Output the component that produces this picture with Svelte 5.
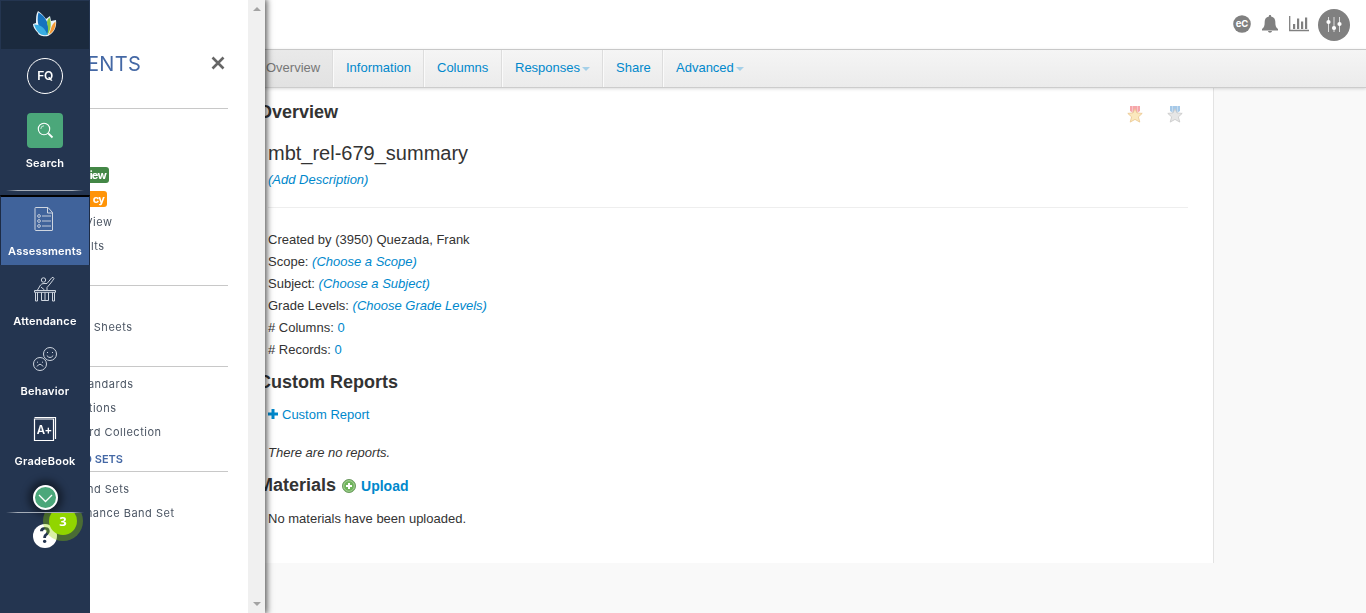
<script>
  const tabs = [
    { label: 'Overview', active: true, width: 83 },
    { label: 'Information', width: 91 },
    { label: 'Columns', width: 78 },
    { label: 'Responses', caret: true, width: 101 },
    { label: 'Share', width: 60 },
    { label: 'Advanced', caret: true, width: 96 }
  ];
  const details = [
    ['Scope:', '(Choose a Scope)', true],
    ['Subject:', '(Choose a Subject)', true],
    ['Grade Levels:', '(Choose Grade Levels)', true],
    ['# Columns:', '0', false],
    ['# Records:', '0', false]
  ];
  const nav = ['Assessments', 'Attendance', 'Behavior', 'GradeBook'];
</script>

<div class="page">
  <header>
    <svg width="18" height="18" viewBox="0 0 18 18" class="ec"><circle cx="9" cy="9" r="8.800" fill="#808080" /><text x="9" y="12" text-anchor="middle">eC</text></svg>
    <svg width="16" height="18" viewBox="0 0 16 18" class="bell"><path d="M8 0c1 0 1.200.7 1.100 1.400C12 2 13.300 4 13.300 6.600c0 4 .5 6 2.700 7.400v1.400H0V14c2.200-1.400 2.700-3.400 2.700-7.400C2.700 4 4 2 6.900 1.400 6.800.7 7 0 8 0ZM6 16h4c-.3 2.300-3.700 2.300-4 0Z" fill="#808080" /></svg>
    <svg width="20" height="16" viewBox="0 0 20 16" class="chart"><path d="M.7 0v14.500H20" fill="none" stroke="#808080" stroke-width="1.300" /><path d="M4 8h2.200v5H4zM8 2.500h2.200V13H8zM12 5.500h2.200V13H12zM16 1.500h2.200V13H16z" fill="#808080" /></svg>
    <svg width="32" height="32" viewBox="0 0 32 32"><circle cx="16" cy="16" r="16" fill="#808080" /><path d="M10.500 8v15M16 8v15M21.500 8v15" stroke="#ddd" stroke-width="1" /><g fill="#fff"><circle cx="10.500" cy="13" r="2.100" /><circle cx="16" cy="19" r="2.100" /><circle cx="21.500" cy="15" r="2.100" /></g></svg>
  </header>
  <nav class="tabs">
    {#each tabs as t}
      <a class="tab" class:active={t.active} style="width:{t.width}px">{t.label}{#if t.caret}<i class="caret"></i>{/if}</a>
    {/each}
  </nav>
  <main>
    <div class="top">
      <h2>Overview</h2>
      <div class="medals">
        {#each [['#f6a6aa', '#fbe8bd', '#eac58e'], ['#a6c9e8', '#e6e6e6', '#c8c8c8']] as c}
          <svg width="16" height="17" viewBox="0 0 16 17"><path d="M3 0h10v5l-5 3-5-3z" fill={c[0]} /><path d="M5.500 0v6M10.500 0v6" stroke="#fff" stroke-opacity=".35" /><path d="m8 2.700 2 4.200 5.200.5-3.800 3.500 1.400 5.200L8 13.400l-4.800 2.700 1.400-5.200L.8 7.400 6 6.900z" fill={c[1]} stroke={c[2]} stroke-width=".8" /></svg>
        {/each}
      </div>
    </div>
    <h1>mbt_rel-679_summary</h1>
    <div class="desc"><a><em>(Add Description)</em></a></div>
    <div class="details">
      <p>Created by (3950) Quezada, Frank</p>
      {#each details as d}
        <p>{d[0]} <a class:it={d[2]}>{d[1]}</a></p>
      {/each}
    </div>
    <h2 class="custom">Custom Reports</h2>
    <p class="add"><svg width="10" height="10" viewBox="0 0 10 10"><path d="M3.500 0h3v3.500H10v3H6.500V10h-3V6.500H0v-3h3.500z" fill="#08c" /></svg><a>Custom Report</a></p>
    <p class="none"><em>There are no reports.</em></p>
    <h2 class="mat">Materials
      <svg width="14" height="14" viewBox="0 0 14 14"><circle cx="7" cy="7" r="6.500" fill="#6eb35a" stroke="#6c9a60" /><circle cx="7" cy="7" r="5.300" fill="none" stroke="#a4d195" /><path d="M7 4v6M4 7h6" stroke="#fff" stroke-width="2" /></svg>
      <a>Upload</a>
    </h2>
    <p class="nomat">No materials have been uploaded.</p>
  </main>
</div>

<aside class="flyout">
  <div class="panel">
    <div class="title"><span>ENTS</span><svg width="14" height="14" viewBox="0 0 14 14"><path d="m1.500 1.500 11 11M12.500 1.500l-11 11" stroke="#666" stroke-width="2.600" /></svg></div>
    <section class="first">
      <div class="badge green"><span>iew</span></div>
      <div class="badge orange"><span>cy</span></div>
      <div class="line" style="width:22px"><span>View</span></div>
      <div class="line" style="width:14px"><span>lts</span></div>
    </section>
    <section class="sheets"><div class="line" style="width:42px"><span>r Sheets</span></div></section>
    <section class="sets">
      <div class="line" style="width:43px"><span>andards</span></div>
      <div class="line" style="width:26px"><span>tions</span></div>
      <div class="line" style="width:71px"><span>ard Collection</span></div>
      <div class="subhead"><span>D SETS</span></div>
    </section>
    <section class="bands">
      <div class="line" style="width:39px"><span>nd Sets</span></div>
      <div class="line" style="width:84px"><span>mance Band Set</span></div>
    </section>
  </div>
  <div class="scroll"><i class="up"></i><i class="down"></i></div>
</aside>

<aside class="rail">
  <div class="logo">
    <svg width="26" height="28" viewBox="0 0 26 28"><path d="M6 1c4 3 6 5 8 8l4-3 1 5 5-1c1 7-2 13-8 16-5 1-10-1-10-3C3 20 1 17 1 14l3-1C4 8 4 4 6 1Z" fill="#e9f4fb" /><path d="M6.500 2.500C14 7 18 14 15.500 25 7 22 4 12 6.500 2.500Z" fill="#1673be" /><path d="M2 14.500c8 0 11 4.500 13.500 10.500-8 1-10.500-3-13.500-10.500Z" fill="#39aee2" /><path d="M17.500 7.500c2.500 7 1 13-2 17.500 1-6 .5-9-.5-12 0-2 .5-4 2.500-5.500Z" fill="#8cc63f" /><path d="M23.500 11.500c.5 6-2 10.500-7 13.500 3-5 2-10 7-13.500Z" fill="#f59a35" /></svg>
  </div>
  <div class="user">FQ</div>
  <div class="search"><svg width="17" height="17" viewBox="0 0 17 17" fill="none" stroke="#fff"><circle cx="7" cy="7" r="5.700" stroke-width="1.100" /><path d="M3.800 7A3.200 3.200 0 0 1 7 3.800" stroke-width=".7" /><path d="m11.300 11.300 4.200 4.200" stroke-width="1.800" /></svg></div>
  <div class="slabel">Search</div>
  <div class="rule"></div>
  {#each nav as n, i}
    <div class="item" class:current={i === 0}>
      <svg width="24" height="26" viewBox="0 0 24 26" fill="none" stroke="#cfd6e0" stroke-width="1">
        {#if i === 0}
          <path d="M3 1.500h12l4.500 5v17.500q0 .500-.500.500h-16q-1 0-1-1v-21q0-1 .500-1ZM14.500 1.500V7H20" />
          <g stroke-width=".9"><circle cx="6" cy="10" r="1.400" /><circle cx="6" cy="15" r="1.400" /><circle cx="6" cy="20" r="1.400" /><path d="M9 10h9M9 15h9M9 20h9" /></g>
        {:else if i === 1}
          <circle cx="10.500" cy="4" r="2.200" /><path d="M4.500 14l3-5q1-1.500 3.500-1.500h3l5-6q1.500-.500 2 .800-.200 1-4 5.700l-3 3.500V14M8 11l3.500 3M1.500 14.500h21v1.800h-21zM2.500 16.500V25h2v-8.500M19.500 16.500V25h2v-8.500M8.500 16.500v8h7v-8M12 16.500v8" />
        {:else if i === 2}
          <circle cx="17" cy="8" r="6.500" /><circle cx="7" cy="18" r="6.500" /><path d="M13.800 9.500q3.200 4 6.400 0M4 20.500q3-4.500 6 0M14.500 6v1M19.500 6v1M4.500 15.700v1M9.500 15.700v1" />
        {:else}
          <path d="M1.500 3h19v21.500h-19zM1.500 1.500h21V23" stroke="#fff" stroke-width="1.200" /><text x="11.300" y="17.800" text-anchor="middle">A+</text>
        {/if}
      </svg>
      <span>{n}</span>
    </div>
  {/each}
  <div class="more"><i><svg width="15" height="9" viewBox="0 0 15 9" fill="none" stroke="#fff" stroke-width="1.300"><path d="m1 1 6.500 6.500L14 1" /></svg></i></div>
  <div class="rule bottom"></div>
  <div class="help"><i class="q">?</i><b>3</b></div>
</aside>

<style>
  :global(body) { margin: 0; background: #f9f9f9; overflow: hidden; }
  .page { height: 613px; font: 13px/22px "Liberation Sans", Arial, sans-serif; color: #333; }
  h1, h2, p { margin: 0; }
  a { color: #08c; }
  header { height: 49px; background: #fff; display: flex; justify-content: flex-end; align-items: center; padding-right: 16px; box-sizing: border-box; }
  .ec { margin: 0 11px 2px 0; }
  .ec text { font: bold 9.500px Inter, sans-serif; fill: #fff; }
  .bell { margin: 0 11px 2px 0; }
  .chart { margin: 0 9px 2px 0; }
  .tabs { display: flex; height: 39px; box-sizing: border-box; padding-left: 250px; border-top: 1px solid #c8c8c8; border-bottom: 1px solid #ccc; background: linear-gradient(#f5f5f5, #ebebeb); box-shadow: 0 1px 3px rgba(0,0,0,.15); position: relative; }
  .tab { box-sizing: border-box; height: 37px; line-height: 35px; padding-left: 13px; border-right: 1px solid #ddd; box-shadow: 1px 0 #fafafa; white-space: nowrap; }
  .tab:last-child { border: 0; box-shadow: none; }
  .tab.active { color: #777; background: linear-gradient(#e9e9e9, #e2e2e2); padding-left: 16px; }
  .caret { display: inline-block; border: 4px solid transparent; border-top-color: #a5d0e8; border-bottom: 0; margin-left: 2px; vertical-align: 1px; }
  main { width: 945px; height: 475px; padding-left: 268px; background: #fff; border-right: 1px solid #e3e3e3; }
  h2 { font-size: 18px; line-height: 24px; margin-left: -10px; }
  .top { display: flex; justify-content: space-between; align-items: flex-start; height: 52px; }
  .top h2 { padding-top: 12px; }
  .medals { display: flex; gap: 24px; padding: 18px 30px 0 0; }
  h1 { font-size: 20px; font-weight: 400; line-height: 26px; height: 29px; }
  .desc { height: 38px; width: 920px; border-bottom: 1px solid #eee; }
  .details { padding-top: 21px; }
  .it { font-style: italic; }
  .custom { margin-top: 9px; }
  .add { display: flex; align-items: center; gap: 4px; margin-top: 10px; }
  .add svg { margin-top: -2px; }
  .none { margin-top: 16px; }
  .mat { margin-top: 9px; }
  .mat svg { vertical-align: -2px; margin: 0 0 0 1px; }
  .mat a { font-size: 14px; }
  .nomat { margin-top: 10px; }

  .flyout { position: fixed; left: 90px; top: 0; width: 175px; height: 613px; display: flex; background: #fff; box-shadow: 1px 0 6px 1px rgba(0,0,0,.65); font: 11px/24px Inter, sans-serif; color: #4b5563; letter-spacing: .5px; }
  .panel { width: 158px; overflow: hidden; }
  .title { width: 138px; height: 108px; border-bottom: 1px solid #c8c8c8; display: flex; justify-content: space-between; }
  .title span { font-size: 20px; line-height: 28px; color: #4468a5; margin: 50px 0 0 -3px; letter-spacing: .3px; }
  .title svg { margin: 56px 3px 0 0; }
  .line, .badge, .subhead { display: flex; justify-content: flex-end; overflow: hidden; white-space: nowrap; }
  .line span { margin-right: -.5px; }
  section { width: 138px; box-sizing: border-box; border-bottom: 1px solid #c8c8c8; }
  .first { height: 177px; padding-top: 58px; }
  .badge { height: 16px; line-height: 16px; color: #fff; font-weight: 700; border-radius: 0 3px 3px 0; box-sizing: border-box; padding-right: 3px; margin-bottom: 8px; letter-spacing: -.8px; }
  .green { width: 19px; background: #438746; }
  .orange { width: 17px; background: #ff9408; margin-bottom: 3px; }
  .first .line { position: relative; }
  .sheets { height: 81px; padding-top: 29px; }
  .sets { height: 105px; padding-top: 5px; }
  .subhead { width: 33px; color: #4468a5; font-weight: 600; padding-top: 3px; letter-spacing: 0; }
  .bands { border: 0; padding-top: 5px; }
  .scroll { width: 17px; background: #f0f0f0; display: flex; flex-direction: column; justify-content: space-between; align-items: center; padding: 7px 0; box-sizing: border-box; }
  .up, .down { border: 4px solid transparent; }
  .up { border-bottom-color: #a3a3a3; border-top: 0; }
  .down { border-top-color: #a3a3a3; border-bottom: 0; }

  .rail { position: fixed; left: 0; top: 0; width: 90px; height: 613px; background: #243550; color: #fff; font: 600 11px/16px Inter, sans-serif; letter-spacing: .22px; text-align: center; display: flex; flex-direction: column; align-items: center; }
  .logo { width: 88px; height: 48px; margin-top: 1px; flex-shrink: 0; background: #1b2a3e; display: flex; align-items: center; justify-content: center; }
  .logo svg { margin-top: -3px; }
  .user { width: 34px; height: 34px; flex-shrink: 0; border: 1px solid #fff; border-radius: 50%; line-height: 34px; margin-top: 9px; font-size: 12px; letter-spacing: -.3px; }
  .search { width: 36px; height: 35px; flex-shrink: 0; margin-top: 19px; border-radius: 4px; background: #4ba77a; display: flex; align-items: center; justify-content: center; }
  .slabel { margin-top: 7px; height: 35px; flex-shrink: 0; }
  .rule { width: 78px; height: 1px; flex-shrink: 0; background: linear-gradient(90deg, transparent, #a5adb8 15%, #a5adb8 85%, transparent); }
  .item { width: 90px; height: 70px; flex-shrink: 0; box-sizing: border-box; padding-top: 11px; display: flex; flex-direction: column; align-items: center; }
  .item span { margin-top: 11px; }
  .item text { font: 600 11.500px Inter, sans-serif; fill: #fff; stroke: none; letter-spacing: -.3px; }
  .current { margin-top: 4px; border: 1px solid #1d2c46; border-top: 2px solid #000; border-bottom: 0; background: #40639b; background-clip: padding-box; padding-top: 9px; }
  .more { height: 47px; display: flex; align-items: center; flex-shrink: 0; }
  .more i { width: 21px; height: 21px; border: 2px solid #fff; border-radius: 50%; background: #4ba77a; display: flex; align-items: center; justify-content: center; box-shadow: 0 0 7px 5px rgba(0,0,0,.42); margin-top: -2px; }
  .more svg { margin-top: 2px; }
  .rule.bottom { margin-top: -10px; position: relative; }
  .help { position: relative; width: 90px; height: 45px; overflow: hidden; flex-shrink: 0; }
  .q { position: absolute; left: 33px; top: 11px; width: 24px; height: 24px; border-radius: 50%; background: #fff; color: #243550; font: 700 22px/24px Roboto, sans-serif; letter-spacing: 0; }
  .help b { position: absolute; left: 49px; top: -6px; width: 28px; height: 28px; border-radius: 50%; background: #91d500; box-shadow: 0 0 0 6px rgba(145,213,0,.35); font: 700 13px/28px "Open Sans", sans-serif; letter-spacing: 0; }
</style>
